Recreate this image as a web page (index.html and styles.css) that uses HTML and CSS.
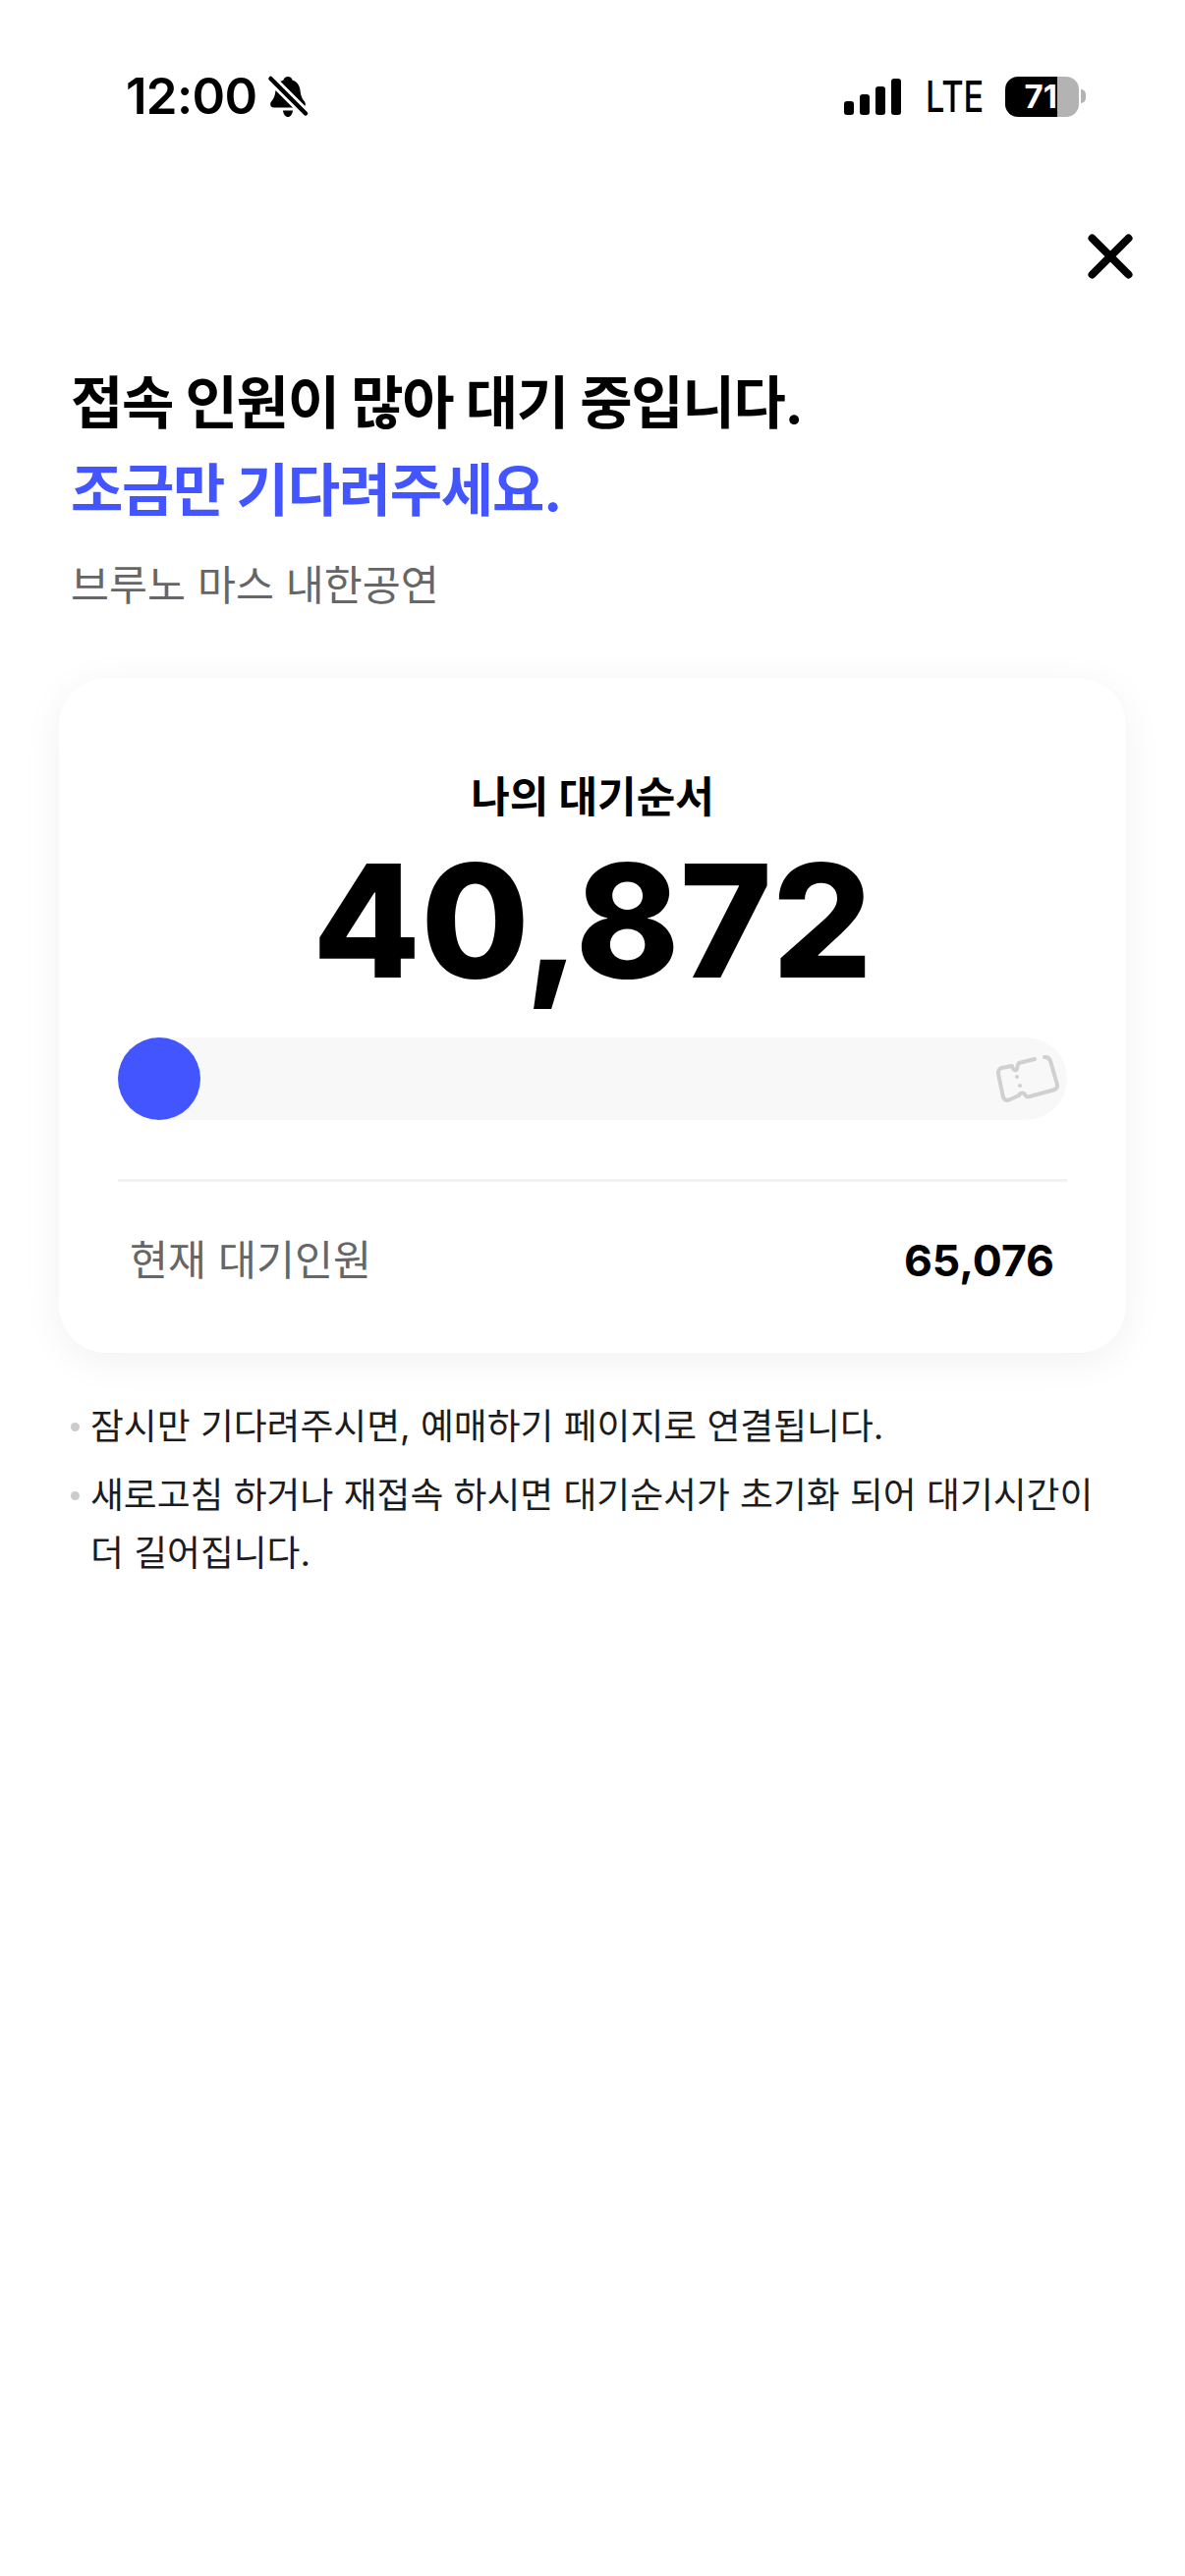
FILE: index.html
```html
<!DOCTYPE html>
<html lang="ko">
<head>
  <meta charset="UTF-8">
  <meta name="viewport" content="width=device-width,initial-scale=1">
  <title>대기 중</title>
  <link rel="stylesheet" href="styles.css">
</head>
<body>
  <header class="status">
    <div class="status-left">
      <span class="time">12:00</span>
      <svg class="bell" width="38" height="42" viewBox="0 0 38 42">
        <path d="M19 1c2.500 0 4 1.500 4.500 3.500 5 1.500 7.500 5.500 8 10.500.5 5 1.500 8 4.500 11.500 1.500 2 1 6-2.500 6H4.500C1 32.500 .500 28.500 2 26.500c3-3.500 4-6.500 4.500-11.500.5-5 3-9 8-10.500C15 2.500 16.500 1 19 1z"/>
        <path d="M14 35.500h10c-.5 4-2.500 6.500-5 6.500s-4.500-2.500-5-6.500z"/>
        <path d="M1.500 3l36 36" class="bell-gap"/>
        <path d="M1.500 3l35.500 35.500" class="bell-line"/>
      </svg>
    </div>
    <div class="status-right">
      <div class="signal"><i class="b1"></i><i class="b2"></i><i class="b3"></i><i class="b4"></i></div>
      <span class="lte">LTE</span>
      <div class="battery">
        <div class="battery-body"><span>71</span></div>
        <div class="battery-cap"></div>
      </div>
    </div>
  </header>

  <div class="topbar">
    <button class="close" aria-label="닫기">
      <svg width="50" height="50" viewBox="0 0 50 50"><path d="M6.500 6.500l37 37M43.500 6.500l-37 37"/></svg>
    </button>
  </div>

  <section class="intro">
    <h1>접속 인원이 많아 대기 중입니다.<br><em>조금만 기다려주세요.</em></h1>
    <p>브루노 마스 내한공연</p>
  </section>

  <main class="card">
    <div class="card-label">나의 대기순서</div>
    <div class="card-number">40,872</div>
    <div class="track">
      <div class="knob"></div>
      <svg class="ticket" width="64" height="50" viewBox="0 0 64 50">
        <path d="M49 3C52 2.500 54 4 55 7L62 31C62.500 34 61 35.500 58 36.500L34 43C31 44 30 43 29 41C28 39 24 39 23 42L13 46.500C10 47.500 8 46 7 44L2 20C1.500 17 3 15 5 14L16 12C16 15 20 18 21 15C22 12 21 10 23 9L39 5"/>
        <circle cx="21" cy="23" r="2"/>
        <circle cx="24" cy="32" r="2"/>
      </svg>
    </div>
    <div class="total">
      <span class="total-label">현재 대기인원</span>
      <span class="total-value">65,076</span>
    </div>
  </main>

  <ul class="notes">
    <li>잠시만 기다려주시면, 예매하기 페이지로 연결됩니다.</li>
    <li>새로고침 하거나 재접속 하시면 대기순서가 초기화 되어 대기시간이 더 길어집니다.</li>
  </ul>
</body>
</html>
```

FILE: styles.css
```css
:root {
  --accent: #4255ff;
  --ink: #000;
  --muted: #666;
}
* { box-sizing: border-box; }
body {
  margin: 0;
  width: 1206px;
  min-height: 2622px;
  background: #fff;
  color: var(--ink);
  font-family: "Inter", "Noto Sans CJK KR", sans-serif;
}

.status {
  height: 194px;
  padding: 68px 101px 0 128px;
  display: flex;
  justify-content: space-between;
  align-items: flex-start;
}
.status-left { display: flex; align-items: center; gap: 13px; height: 60px; }
.time { font-size: 51px; line-height: 60px; font-weight: 600; letter-spacing: -.7px; }
.bell { fill: #000; overflow: visible; }
.bell-gap { stroke: #fff; stroke-width: 10; }
.bell-line { stroke: #000; stroke-width: 4.500; stroke-linecap: round; }
.status-right { display: flex; align-items: center; height: 60px; }
.signal { display: flex; align-items: flex-end; gap: 6px; height: 37px; }
.signal i { display: block; width: 10px; background: #000; border-radius: 3px; }
.b1 { height: 14px; }
.b2 { height: 21px; }
.b3 { height: 29px; }
.b4 { height: 37px; }
.lte {
  margin-left: 25px;
  width: 57px;
  font-size: 44px;
  font-weight: 500;
  line-height: 60px;
  transform: scaleX(.78);
  transform-origin: left center;
}
.battery { margin-left: 24px; display: flex; align-items: center; }
.battery-body {
  width: 75px;
  height: 41px;
  border-radius: 13px;
  background: linear-gradient(90deg, #000 0 53px, #b3b3b3 53px);
  display: flex;
  align-items: center;
  justify-content: flex-end;
  padding-right: 22px;
  color: #fff;
  font-size: 33px;
  font-weight: 700;
}
.battery-cap {
  margin-left: 2px;
  width: 5px;
  height: 14px;
  background: #b3b3b3;
  border-radius: 0 5px 5px 0;
}

.topbar { display: flex; justify-content: flex-end; padding-right: 51px; height: 172px; }
.close { padding: 0; border: 0; background: none; width: 50px; height: 50px; margin-top: 42px; }
.close svg { display: block; fill: none; stroke: #000; stroke-width: 8; stroke-linecap: round; }

.intro { padding: 0 72px; }
h1 {
  margin: 0;
  font-size: 58px;
  line-height: 89px;
  font-weight: 700;
  letter-spacing: -1.3px;
}
h1 em { font-style: normal; color: var(--accent); }
.intro p { margin: 24px 0 0; font-size: 42.400px; line-height: 56px; color: var(--muted); }

.card {
  margin: 66px 60px 0;
  height: 687px;
  padding: 93px 60px 0;
  border-radius: 48px;
  background: #fff;
  box-shadow: 0 8px 40px rgba(0,0,0,0.06);
}
.card-label { text-align: center; font-size: 43px; line-height: 56px; font-weight: 700; }
.card-number {
  margin-top: 8px;
  text-align: center;
  font-size: 160px;
  line-height: 180px;
  font-weight: 800;
}
.track {
  margin-top: 29px;
  height: 84px;
  border-radius: 42px;
  background: #f8f8f8;
  display: flex;
  align-items: center;
  justify-content: space-between;
  padding-right: 8px;
}
.knob { width: 84px; height: 84px; border-radius: 50%; background: var(--accent); }
.ticket { fill: none; stroke: #d0d0d0; stroke-width: 4; stroke-linecap: round; stroke-linejoin: round; }
.ticket circle { fill: #d0d0d0; stroke: none; }
.total {
  margin-top: 60px;
  padding: 52px 13px 0 12px;
  border-top: 3px solid #f2f2f2;
  display: flex;
  justify-content: space-between;
  align-items: center;
}
.total-label { font-size: 42.400px; line-height: 56px; color: var(--muted); }
.total-value { font-size: 44.500px; font-weight: 700; }

.notes { margin: 45px 0 0; padding: 0 80px 0 92px; list-style: none; font-size: 36.800px; line-height: 59px; color: #1c1c1e; }
.notes li { position: relative; margin-bottom: 11px; }
.notes li::before {
  content: "";
  position: absolute;
  left: -20px;
  top: 26px;
  width: 9px;
  height: 9px;
  border-radius: 50%;
  background: #ccc;
}
```
